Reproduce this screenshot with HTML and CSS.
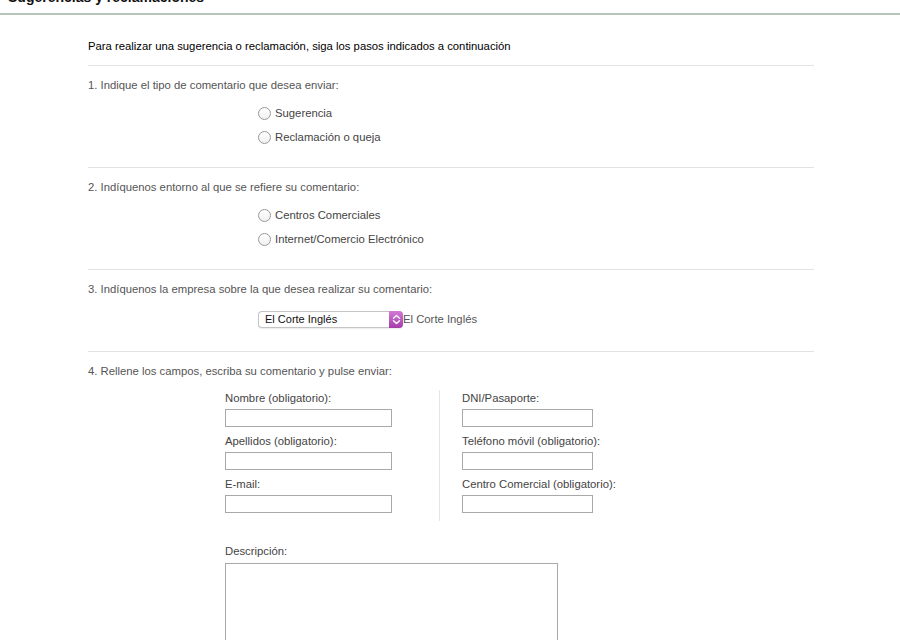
FILE: index.html
```html
<!DOCTYPE html>
<html lang="es">
<head>
<meta charset="utf-8">
<title>Sugerencias y reclamaciones</title>
<link rel="stylesheet" href="styles.css">
</head>
<body>
<header class="head">
  <h1 class="title">Sugerencias y reclamaciones</h1>
</header>
<main class="form">
  <p class="intro">Para realizar una sugerencia o reclamación, siga los pasos indicados a continuación</p>

  <section class="step">
    <p class="q">1. Indique el tipo de comentario que desea enviar:</p>
    <div class="options">
      <label class="opt"><span class="radio"></span>Sugerencia</label>
      <label class="opt"><span class="radio"></span>Reclamación o queja</label>
    </div>
  </section>

  <section class="step">
    <p class="q">2. Indíquenos entorno al que se refiere su comentario:</p>
    <div class="options">
      <label class="opt"><span class="radio"></span>Centros Comerciales</label>
      <label class="opt"><span class="radio"></span>Internet/Comercio Electrónico</label>
    </div>
  </section>

  <section class="step step3">
    <p class="q">3. Indíquenos la empresa sobre la que desea realizar su comentario:</p>
    <div class="select-row">
      <div class="select">
        <span class="select-text">El Corte Inglés</span>
        <span class="select-btn">
          <svg width="9" height="11" viewBox="0 0 9 11"><path d="M1.5 4.2 L4.5 1.5 L7.5 4.2 M1.5 6.8 L4.5 9.5 L7.5 6.8" fill="none" stroke="#fff" stroke-width="1.4" stroke-linecap="round" stroke-linejoin="round"/></svg>
        </span>
      </div>
      <span class="select-value">El Corte Inglés</span>
    </div>
  </section>

  <section class="step last">
    <p class="q">4. Rellene los campos, escriba su comentario y pulse enviar:</p>
    <div class="cols">
      <div class="col left">
        <label class="field"><span class="lbl">Nombre (obligatorio):</span><span class="input wide"></span></label>
        <label class="field"><span class="lbl">Apellidos (obligatorio):</span><span class="input wide"></span></label>
        <label class="field"><span class="lbl">E-mail:</span><span class="input wide"></span></label>
      </div>
      <div class="col right">
        <label class="field"><span class="lbl">DNI/Pasaporte:</span><span class="input narrow"></span></label>
        <label class="field"><span class="lbl">Teléfono móvil (obligatorio):</span><span class="input narrow"></span></label>
        <label class="field"><span class="lbl">Centro Comercial (obligatorio):</span><span class="input narrow"></span></label>
      </div>
    </div>
    <div class="desc">
      <span class="lbl">Descripción:</span>
      <span class="textarea"></span>
    </div>
  </section>
</main>
</body>
</html>
```

FILE: styles.css
```css
html, body {
  margin: 0;
  padding: 0;
  background: #fff;
  overflow: hidden;
}
body {
  font-family: "Liberation Sans", Arial, sans-serif;
  font-size: 11.3px;
  line-height: 16px;
  color: #555;
}
.head {
  border-bottom: 2px solid #b5c5b7;
  padding-bottom: 7px;
}
.title {
  margin: -12px 0 0 8px;
  font-size: 14px;
  line-height: 18px;
  font-weight: bold;
  color: #111;
}
.form {
  margin-left: 88px;
  width: 726px;
}
.intro {
  margin: 23px 0 0;
  padding-bottom: 11px;
  border-bottom: 1px solid #e2e2e2;
  color: #000;
}
.step {
  padding: 11px 0 18px;
  border-bottom: 1px solid #e2e2e2;
}
.step.last {
  border-bottom: none;
}
.q {
  margin: 0;
}
.options {
  margin: 8px 0 0 170px;
  display: flex;
  flex-direction: column;
}
.opt {
  display: flex;
  align-items: center;
  height: 24px;
  color: #444;
}
.radio {
  width: 11px;
  height: 11px;
  border: 1px solid #9a9a9a;
  border-radius: 50%;
  background: linear-gradient(#fff, #f0f0f0);
  margin-right: 4px;
  box-sizing: content-box;
}
.step3 {
  padding-bottom: 20px;
}
.select-row {
  margin: 10px 0 0 170px;
  height: 24px;
  display: flex;
  align-items: center;
}
.select {
  display: flex;
  width: 145px;
  height: 17px;
  box-sizing: border-box;
  border: 1px solid #c4c4c4;
  border-right: none;
  border-radius: 4px;
  background: #fff;
  box-shadow: 0 1px 1px rgba(0,0,0,0.08);
}
.select-text {
  flex: 1;
  padding-left: 6px;
  font-size: 11px;
  line-height: 15px;
  color: #111;
}
.select-btn {
  width: 14px;
  margin: -1px 0;
  border-radius: 0 4px 4px 0;
  background: linear-gradient(#d27ad8, #a53cab);
  display: flex;
  align-items: center;
  justify-content: center;
}
.select-value {
  color: #555;
}
.cols {
  display: flex;
  margin: 11px 0 0 137px;
}
.col.left {
  width: 214px;
  border-right: 1px solid #e4e4e4;
  padding-bottom: 2px;
}
.col.right {
  padding-left: 22px;
}
.field {
  display: flex;
  flex-direction: column;
  margin-bottom: 6px;
}
.lbl {
  display: block;
  color: #444;
}
.input {
  display: block;
  margin-top: 3px;
  height: 18px;
  box-sizing: border-box;
  border: 1px solid #a9a9a9;
  background: #fff;
}
.input.wide {
  width: 167px;
}
.input.narrow {
  width: 131px;
}
.desc {
  margin: 22px 0 0 137px;
}
.textarea {
  display: block;
  margin-top: 4px;
  width: 333px;
  height: 120px;
  box-sizing: border-box;
  border: 1px solid #a9a9a9;
  background: #fff;
}
```
